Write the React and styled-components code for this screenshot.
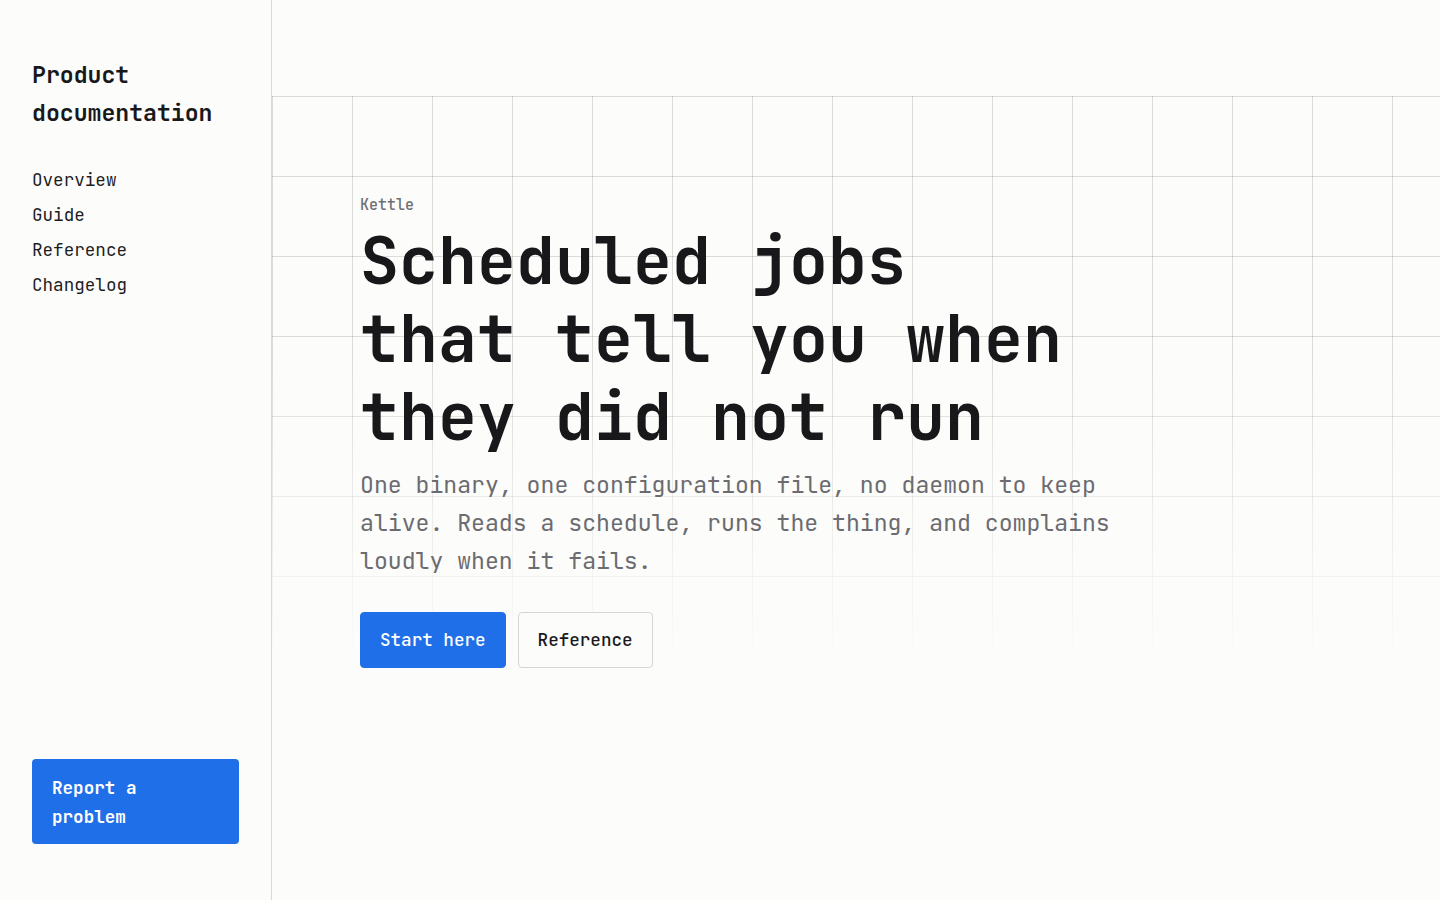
import styled, { createGlobalStyle } from "styled-components";

const GlobalStyle = createGlobalStyle`
  html, body {
    margin: 0;
    padding: 0;
    background: #fcfcfb;
  }
  body {
    font-family: "JetBrains Mono", "DejaVu Sans Mono", "Liberation Mono", monospace;
    color: #18181b;
  }
  * {
    box-sizing: border-box;
  }
`;

const Layout = styled.div`
  display: grid;
  grid-template-columns: 272px 1fr;
  min-height: 900px;
`;

const Sidebar = styled.aside`
  display: flex;
  flex-direction: column;
  padding: 56px 32px 56px;
  border-right: 1px solid #d9d9d9;
`;

const Brand = styled.div`
  font-size: 23.15px;
  line-height: 38px;
  font-weight: 700;
  color: #18181b;
`;

const Nav = styled.nav`
  display: flex;
  flex-direction: column;
  gap: 6px;
  margin-top: 33px;
`;

const NavLink = styled.a`
  font-size: 17.6px;
  line-height: 29px;
  color: #1c1c1f;
  text-decoration: none;
`;

const ReportButton = styled.button`
  margin-top: auto;
  width: 100%;
  text-align: left;
  font-family: inherit;
  font-size: 17.6px;
  line-height: 29px;
  font-weight: 600;
  color: #ffffff;
  background: #1f6fe8;
  border: 0;
  border-radius: 4px;
  padding: 13.5px 20px;
`;

const Main = styled.main`
  padding-top: 96px;
`;

const Hero = styled.section`
  position: relative;
  padding: 94px 88px 0;

  &::before {
    content: "";
    position: absolute;
    inset: 0;
    background-image:
      linear-gradient(to right, rgba(0, 0, 0, 0.13) 1px, transparent 1px),
      linear-gradient(to bottom, rgba(0, 0, 0, 0.13) 1px, transparent 1px);
    background-size: 80px 80px;
    -webkit-mask-image: linear-gradient(to bottom, #000 45%, transparent 100%);
    mask-image: linear-gradient(to bottom, #000 45%, transparent 100%);
    pointer-events: none;
  }
`;

const HeroBody = styled.div`
  position: relative;
`;

const Eyebrow = styled.div`
  font-size: 15px;
  line-height: 24px;
  font-weight: 500;
  color: #6e6e73;
  margin: 3px 0 5px;
`;

const Headline = styled.h1`
  margin: 0;
  font-size: 65px;
  line-height: 78px;
  font-weight: 600;
  max-width: 18.5ch;
  color: #18181b;
`;

const Lead = styled.p`
  margin: 10px 0 0;
  font-size: 23.15px;
  line-height: 38px;
  max-width: 56ch;
  color: #6b6b70;
`;

const Actions = styled.div`
  display: flex;
  gap: 12px;
  margin-top: 32px;
`;

const Button = styled.a`
  display: inline-block;
  font-size: 17.6px;
  line-height: 28px;
  padding: 13px 19px;
  border-radius: 4px;
  text-decoration: none;
  font-weight: 500;
  color: ${(p) => (p.$primary ? "#ffffff" : "#18181b")};
  background: ${(p) => (p.$primary ? "#1f6fe8" : "#fcfcfb")};
  border: 1px solid ${(p) => (p.$primary ? "#1f6fe8" : "#d6d6d9")};
`;

const navItems = ["Overview", "Guide", "Reference", "Changelog"];

export default function App() {
  return (
    <>
      <GlobalStyle />
      <Layout>
        <Sidebar>
          <Brand>Product documentation</Brand>
          <Nav>
            {navItems.map((item) => (
              <NavLink key={item} href="#">
                {item}
              </NavLink>
            ))}
          </Nav>
          <ReportButton>Report a problem</ReportButton>
        </Sidebar>
        <Main>
          <Hero>
            <HeroBody>
              <Eyebrow>Kettle</Eyebrow>
              <Headline>Scheduled jobs that tell you when they did not run</Headline>
              <Lead>
                One binary, one configuration file, no daemon to keep alive.
                Reads a schedule, runs the thing, and complains loudly when it
                fails.
              </Lead>
              <Actions>
                <Button $primary href="#">
                  Start here
                </Button>
                <Button href="#">Reference</Button>
              </Actions>
            </HeroBody>
          </Hero>
        </Main>
      </Layout>
    </>
  );
}
